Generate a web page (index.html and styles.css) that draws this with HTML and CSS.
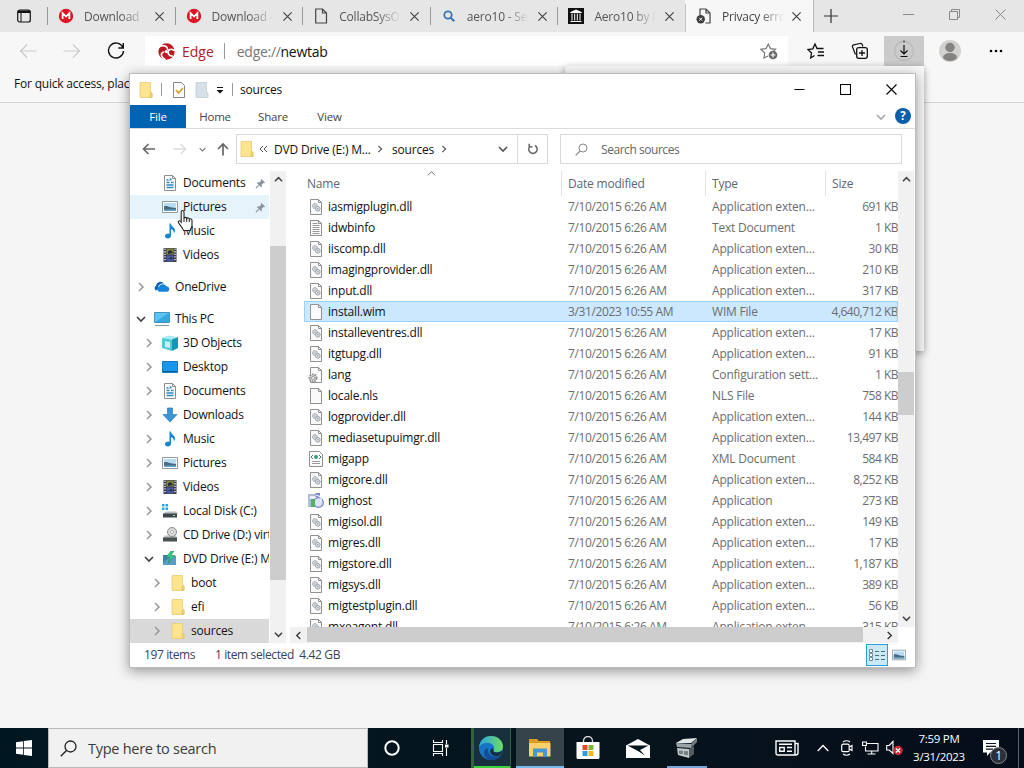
FILE: index.html
```html
<!DOCTYPE html>
<html lang="en">
<head>
  <meta charset="utf-8">
  <title>sources</title>
  <link rel="stylesheet" href="styles.css">
</head>
<body>
  <!-- shared icons -->
  <svg class="defs" width="0" height="0">
    <symbol id="close" viewBox="0 0 12 12"><path d="M1.5 1.5l9 9M10.5 1.5l-9 9" fill="none" stroke="currentColor" stroke-width="1.3"/></symbol>
    <symbol id="right" viewBox="0 0 10 10"><path d="M3 1l4 4-4 4" fill="none" stroke="currentColor" stroke-width="1.5"/></symbol>
    <symbol id="down" viewBox="0 0 10 10"><path d="M1 3l4 4 4-4" fill="none" stroke="currentColor" stroke-width="1.7"/></symbol>
    <symbol id="up" viewBox="0 0 10 10"><path d="M1 7l4-4 4 4" fill="none" stroke="currentColor" stroke-width="1.7"/></symbol>
    <symbol id="left" viewBox="0 0 10 10"><path d="M7 1L3 5l4 4" fill="none" stroke="currentColor" stroke-width="1.5"/></symbol>
    <symbol id="mega" viewBox="0 0 16 16"><circle cx="8" cy="8" r="7.2" fill="#dc1622"/><path d="M4.6 11V5.2L8 8.6l3.4-3.4V11" fill="none" stroke="#fff" stroke-width="1.8"/></symbol>
    <symbol id="folder" viewBox="0 0 16 16"><path d="M2 .5h10.500v10l1.500.5v4.500H2z" fill="#ffe48f" stroke="#e8cb70" stroke-width=".8"/><path d="M12 15.500v-4l.8-1 1.200.5v4.500z" fill="#f6d873" stroke="#dcbc58" stroke-width=".6"/></symbol>
    <symbol id="docs" viewBox="0 0 16 16"><path d="M2.500.5h8l3 3v12h-11z" fill="#fff" stroke="#8a8f94"/><path d="M10.500.5v3h3" fill="none" stroke="#8a8f94"/><path d="M4.500 5h2M4.500 7.500h3M4.500 10h7M4.500 12.500h7M9 7.500h2.500" stroke="#2f86bd" stroke-width="1.300"/><path d="M7.500 3.500h2v2h-2z" fill="#2f86bd"/></symbol>
    <symbol id="pics" viewBox="0 0 16 16"><path d="M.5 2.500h15v11H.5z" fill="#fff" stroke="#8d99a3"/><path d="M2 4h12v8H2z" fill="#b8dcf3"/><path d="M2 7.500c3-1.500 5 1.500 12 1.500v3H2z" fill="#456b84"/><path d="M2 10.500h12V12H2z" fill="#6ba3c7"/></symbol>
    <symbol id="music" viewBox="0 0 16 16"><path d="M7.500.5h1.400c.3 3 4.100 4 4.100 7 0 1.200-.6 2-1.300 2.700.2-2-.7-3.500-2.600-4.200v6.500c0 1.800-1.600 3-3.300 3S3 14.500 3 13.100c0-1.700 2.300-3 4.500-2.400z" fill="#1287d2"/></symbol>
    <symbol id="video" viewBox="0 0 16 16"><path d="M1.500 1h13v14h-13z" fill="#333a46"/><path d="M4.500 1.500h7v6h-7z" fill="#8a8640"/><path d="M4.500 8.500h7v6h-7z" fill="#4b58a3"/><path d="M6 4l3-1 2 3-5 1zM6 12l3-2 2 2z" fill="#27313b"/><path d="M3 1.500v13M13 1.500v13" stroke="#f4f4f4" stroke-width="1.300" stroke-dasharray="1.300 1.300"/></symbol>
    <symbol id="onedrive" viewBox="0 0 16 16"><path d="M1.700 11.500A3 3 0 0 1 2 6.800 4.500 4.500 0 0 1 10 4.500c-3.500-.5-6.500 2-6 5.500z" fill="#0a62b1"/><path d="M5 12.800a2.700 2.700 0 0 1-.2-5A4.300 4.300 0 0 1 12.500 7.300a2.800 2.800 0 0 1 .7 5.500z" fill="#1783d9"/></symbol>
    <symbol id="pc" viewBox="0 0 16 16"><path d="M.5 1.500h15v10H.5z" fill="#5cc3f3" stroke="#4694b8"/><path d="M1 11L15 2v9z" fill="#37a8e2"/><path d="M1 14.500h14" stroke="#7e98a6"/></symbol>
    <symbol id="cube" viewBox="0 0 16 16"><path d="M0 3l6-2.500L16 2 10 4.500z" fill="#aceaf3"/><path d="M0 3l10 1.500V16L0 13z" fill="#4fc8d8"/><path d="M10 4.500L16 2v11l-6 3z" fill="#1595b3"/><path d="M3 6l5 1v6l-5-1z" fill="#c4f0f3"/></symbol>
    <symbol id="desk" viewBox="0 0 16 16"><path d="M.5 2.500h15v11H.5z" fill="#1a96ec" stroke="#1378bd"/><path d="M1 12.500h14" stroke="#0d5e99"/></symbol>
    <symbol id="dl" viewBox="0 0 16 16"><path d="M5.500 1h5v6.500H15L8 15 1 7.500h4.500z" fill="#3a93d5" stroke="#2b7cba" stroke-width=".7"/></symbol>
    <symbol id="disk" viewBox="0 0 16 16"><path d="M4 8.500h10l2 2.500H1z" fill="#b9bec1"/><path d="M1 10.500h14v4H1z" fill="#3f4649"/><path d="M11 12h2v1h-2z" fill="#7ef09d"/><path d="M0 1h2.500v2.500H0zM3.500 1H6v2.500H3.500zM0 4.500h2.500V7H0zM3.500 4.500H6V7H3.500z" fill="#20a9e6"/></symbol>
    <symbol id="cd" viewBox="0 0 16 16"><path d="M3 8.500h11l1 2.500H1z" fill="#b9bec1"/><circle cx="10" cy="5" r="4.500" fill="#ddd" stroke="#888"/><circle cx="10" cy="5" r="1.500" fill="#fff" stroke="#999" stroke-width=".7"/><path d="M1 10.500h14v4H1z" fill="#4b5053"/></symbol>
    <symbol id="dvd" viewBox="0 0 16 16"><path d="M1 4h5l1 1h7v9H1z" fill="#3f80ad"/><path d="M1 12l8-7h5v9H1z" fill="#599dc7"/><path d="M9 0L4 6.500h4L6 12l7-7.500H9L12 0z" fill="#35c982" stroke="#218c5c" stroke-width=".6"/></symbol>
    <symbol id="page" viewBox="0 0 16 16"><path d="M2.500.5h8l3 3v12h-11z" fill="#fafafa" stroke="#919191"/><path d="M10.500.5v3h3" fill="none" stroke="#919191"/></symbol>
    <symbol id="dll" viewBox="0 0 16 16"><use href="#page"/><circle cx="7" cy="7" r="2.300" fill="#eef0f3" stroke="#9aa1a8"/><circle cx="7" cy="7" r=".8" fill="#8c949c"/><circle cx="9.800" cy="9.800" r="2.300" fill="#e4e8ec" stroke="#9aa1a8"/><circle cx="9.800" cy="9.800" r=".8" fill="#8c949c"/></symbol>
    <symbol id="txt" viewBox="0 0 16 16"><use href="#page"/><path d="M4.500 3.500h5M4.500 5.500h7M4.500 7.500h7M4.500 9.500h7M4.500 11.500h7M4.500 13.500h7" stroke="#9a9a9a"/></symbol>
    <symbol id="ini" viewBox="0 0 16 16"><use href="#page"/><circle cx="5" cy="11" r="3.500" fill="#e3e3e3" stroke="#909090" stroke-width="2" stroke-dasharray="1.700 .8"/><circle cx="5" cy="11" r="1.500" fill="#fff" stroke="#888" stroke-width=".8"/></symbol>
    <symbol id="xml" viewBox="0 0 16 16"><path d="M1.500.5h10l3 3v12h-13z" fill="#fcfcfc" stroke="#919191"/><path d="M5 4L3 6l2 2M11 4l2 2-2 2" fill="none" stroke="#447a80"/><circle cx="8" cy="6" r="2" fill="#3a9b7c"/><path d="M4 10.500h8M4 12.500h8" stroke="#999"/></symbol>
    <symbol id="app" viewBox="0 0 16 16"><path d="M0 1h9l2 2v11H0z" fill="#aebdd8"/><path d="M2 3h6v3H2z" fill="#e8f0ff"/><circle cx="10.500" cy="9.500" r="4.800" fill="#dbe3f8" stroke="#7a82cc" stroke-width="1.300"/><path d="M3 6h4v8H3z" fill="#58ad65"/><path d="M7.500 0H12v4H7.500z" fill="#7880c9"/><path d="M8 2l5 2v5" fill="none" stroke="#f0f3ff" stroke-width="1.300"/></symbol>
    <symbol id="pin" viewBox="0 0 12 12"><path d="M7 1l4 4-1 .7-.8-.2L7.300 7.400l.2 2-.9.8L2 5.500l.9-.8 2 .1 1.800-2-.4-1z" fill="#87939d"/><path d="M4 8l-3 3" stroke="#87939d" stroke-width="1.200"/></symbol>
  </svg>

  <div class="browser">
    <div class="tabs">
      <div class="tab-menu"><svg width="16" height="16" viewBox="0 0 16 16"><rect x="1.700" y="2" width="12.600" height="12" rx="2" fill="none" stroke="#111" stroke-width="1.200"/><path d="M2 2.500h12V5H2z" fill="#111"/><path d="M5 5v9" stroke="#111"/></svg></div>
      <div class="tab"><svg class="fav"><use href="#mega"/></svg><span>Download - M</span><svg class="x"><use href="#close"/></svg></div>
      <div class="tab"><svg class="fav"><use href="#mega"/></svg><span>Download - M</span><svg class="x"><use href="#close"/></svg></div>
      <div class="tab"><svg class="fav" viewBox="0 0 16 16"><path d="M2.700 1h6.800l4 4v10H2.700zM9.500 1v4h4" fill="none" stroke="#444" stroke-width="1.200"/></svg><span>CollabSysO</span><svg class="x"><use href="#close"/></svg></div>
      <div class="tab"><svg class="fav" viewBox="0 0 16 16"><circle cx="7" cy="7" r="3.700" fill="none" stroke="#3976b9" stroke-width="1.800"/><path d="M9.700 9.700l3.600 3.600" stroke="#3976b9" stroke-width="2"/></svg><span>aero10 - Se</span><svg class="x"><use href="#close"/></svg></div>
      <div class="tab"><svg class="fav" viewBox="0 0 16 16"><path d="M0 0h16v16H0z" fill="#111"/><path d="M2.500 4.500L8 2l5.500 2.500zM2.500 13.500h11M4 5.500v7M6.700 5.500v7M9.300 5.500v7M12 5.500v7" fill="#fff" stroke="#fff" stroke-width="1"/></svg><span>Aero10 by I</span><svg class="x"><use href="#close"/></svg></div>
      <div class="tab active"><svg class="fav" viewBox="0 0 16 16"><path d="M4 7V1h6l4 4v10H9.500M10 1v4h4" fill="none" stroke="#444" stroke-width="1.200"/><circle cx="4.700" cy="11.200" r="4.200" fill="#3b3b3b"/><path d="M3.200 9.700l3 3M6.200 9.700l-3 3" stroke="#fff"/></svg><span>Privacy erro</span><svg class="x"><use href="#close"/></svg></div>
      <div class="new-tab"><svg width="14" height="14" viewBox="0 0 14 14"><path d="M7 0v14M0 7h14" stroke="#333" stroke-width="1.200"/></svg></div>
      <div class="win-buttons">
        <svg width="11" height="11" viewBox="0 0 11 11"><path d="M0 5.500h11" stroke="#888"/></svg>
        <svg width="11" height="11" viewBox="0 0 11 11"><path d="M.5 2.500h8v8h-8zM2.500 2.500v-2h8v8h-2" fill="none" stroke="#888"/></svg>
        <svg width="11" height="11" viewBox="0 0 11 11"><path d="M.5.5l10 10M10.500.5l-10 10" stroke="#888"/></svg>
      </div>
    </div>
    <div class="toolbar">
      <div class="nav">
        <svg width="18" height="16" viewBox="0 0 18 16"><path d="M17.500 8H1.500M8 1.500L1.500 8 8 14.500" fill="none" stroke="#ccc" stroke-width="1.200"/></svg>
        <svg width="18" height="16" viewBox="0 0 18 16"><path d="M.5 8h16M10 1.500L16.500 8 10 14.500" fill="none" stroke="#ccc" stroke-width="1.200"/></svg>
        <svg width="18" height="18" viewBox="0 0 18 18"><path d="M15.800 5.300A7.500 7.500 0 1 0 16.500 9M16.300 1v5h-5" fill="none" stroke="#111" stroke-width="1.400"/></svg>
      </div>
      <div class="url">
        <svg width="17" height="17" viewBox="0 0 16 16"><circle cx="8" cy="8" r="7.700" fill="#bb1823"/><path d="M0 5c3-4 9-3 9 1.500M16 7.500c-4-3.500-8-.5-6 3 1 1.800 2.500 2 4 1.500M7 15.800C2.500 13.500 2 9.500 5.500 8.500" fill="none" stroke="#fff" stroke-width="1.500"/><circle cx="7.700" cy="8" r="1.500" fill="#fff"/></svg>
        <b>Edge</b><i></i><span>edge://<em>newtab</em></span>
        <svg class="fav-add" width="18" height="18" viewBox="0 0 18 18"><path d="M8 14l-4 2 .7-5L1 7.300l5-.7L8.300 2l2.200 4.600 5 .7-2 2" fill="none" stroke="#777" stroke-width="1.200"/><circle cx="13" cy="13" r="4.300" fill="#666"/><path d="M13 10.500v5M10.500 13h5" stroke="#fff" stroke-width="1.200"/></svg>
      </div>
      <div class="tools">
        <span><svg width="18" height="18" viewBox="0 0 18 18"><path d="M7.500 13.500L3.700 16l.8-5L1 7.500l4.800-.7L8 2l2 4.500h6.500M11 10h6M10.500 13.500H17" fill="none" stroke="#111" stroke-width="1.300"/></svg></span>
        <span><svg width="18" height="18" viewBox="0 0 18 18"><path d="M4.500 12.500L1.500 5Q1 3.300 2.700 2.800L9 1.500q1.800-.3 2.500 1.700l.4 1.300" fill="none" stroke="#111" stroke-width="1.200"/><rect x="5.700" y="5.700" width="10.600" height="10.600" rx="2" fill="none" stroke="#111" stroke-width="1.300"/><path d="M11 8v6M8 11h6" stroke="#111" stroke-width="1.300"/></svg></span>
        <span class="pressed"><svg width="22" height="22" viewBox="0 0 22 22"><circle cx="11" cy="11" r="9.500" fill="none" stroke="#bababa" stroke-width="1.500"/><path d="M11 5v9M7.500 10.500L11 14l3.500-3.500M7.500 16.500h7" fill="none" stroke="#111" stroke-width="1.200"/><path d="M11 .5v2" stroke="#111"/></svg></span>
        <span><svg width="22" height="22" viewBox="0 0 22 22"><circle cx="11" cy="11" r="11" fill="#d3d1cf"/><circle cx="11" cy="7.500" r="4.700" fill="#858381"/><ellipse cx="11" cy="17" rx="7" ry="4" fill="#858381"/></svg></span>
        <span><svg width="14" height="4" viewBox="0 0 14 4"><circle cx="2" cy="2" r="1.300"/><circle cx="7" cy="2" r="1.300"/><circle cx="12" cy="2" r="1.300"/></svg></span>
      </div>
    </div>
    <div class="bookmarks">For quick access, place your favorites here</div>
  </div>

  <div class="flyout"></div>

  <div class="explorer">
    <div class="title">
      <svg class="ic"><use href="#folder"/></svg><i></i>
      <svg class="ic check" viewBox="0 0 16 16"><path d="M2.500.5h8l3 3v12h-11z" fill="#fcfcfc" stroke="#888"/><path d="M5 8l2.500 3L12 6" fill="none" stroke="#d6a332" stroke-width="1.700"/></svg>
      <svg class="ic" viewBox="0 0 16 16"><path d="M2 .5h10.500v10l1.500.5v4.500H2z" fill="#d6e0e8" stroke="#c3ced6" stroke-width=".8"/></svg>
      <svg class="qat" width="8" height="8" viewBox="0 0 8 8"><path d="M1 1.500h6" stroke="#111"/><path d="M.5 4h7L4 7.500z" fill="#111"/></svg><i></i>
      <span>sources</span>
      <div class="controls">
        <svg width="11" height="11" viewBox="0 0 11 11"><path d="M.5 5.500h10" stroke="#000"/></svg>
        <svg width="11" height="11" viewBox="0 0 11 11"><path d="M.5.5h10v10H.5z" fill="none" stroke="#000" stroke-width="1.100"/></svg>
        <svg width="11" height="11" viewBox="0 0 11 11"><path d="M.5.5l10 10M10.500.5l-10 10" stroke="#000" stroke-width="1.100"/></svg>
      </div>
    </div>
    <div class="ribbon">
      <span class="file">File</span><span>Home</span><span>Share</span><span>View</span>
      <svg class="expand" width="10" height="10"><use href="#down"/></svg>
      <div class="help">?</div>
    </div>
    <div class="address">
      <svg class="back" width="14" height="12" viewBox="0 0 14 12"><path d="M13 6H2M6.500 1L1.500 6l5 5" fill="none" stroke="#666" stroke-width="1.600"/></svg>
      <svg class="fwd" width="14" height="12" viewBox="0 0 14 12"><path d="M.5 6H12M7.500 1l5 5-5 5" fill="none" stroke="#ddd" stroke-width="1.600"/></svg>
      <svg class="hist" width="7" height="7"><use href="#down"/></svg>
      <svg class="upper" width="12" height="14" viewBox="0 0 12 14"><path d="M6 13.500V2M1 7l5-5 5 5" fill="none" stroke="#666" stroke-width="1.700"/></svg>
      <div class="path">
        <svg class="ic"><use href="#folder"/></svg>
        <svg class="dbl" width="9" height="8" viewBox="0 0 9 8"><path d="M4 1L1 4l3 3M8 1L5 4l3 3" fill="none" stroke="#555"/></svg>
        <span class="drive">DVD Drive (E:) M...</span>
        <svg width="8" height="8"><use href="#right"/></svg>
        <span class="here">sources</span>
        <svg width="8" height="8"><use href="#right"/></svg>
        <svg class="drop" width="10" height="10"><use href="#down"/></svg>
        <div class="refresh"><svg width="12" height="12" viewBox="0 0 12 12"><path d="M8 2.500A4.200 4.200 0 1 1 3 3.200M2.200.8v3h3.300" fill="none" stroke="#666" stroke-width="1.500"/></svg></div>
      </div>
      <div class="search"><svg width="13" height="13" viewBox="0 0 13 13"><circle cx="8" cy="5" r="4" fill="none" stroke="#888"/><path d="M5 8L.7 12.300" stroke="#888" stroke-width="1.200"/></svg>Search sources</div>
    </div>
    <div class="content">
      <div class="tree">
        <div class="node l2"><svg class="ic"><use href="#docs"/></svg><span>Documents</span><svg class="pin"><use href="#pin"/></svg></div>
        <div class="node l2 hover"><svg class="ic"><use href="#pics"/></svg><span>Pictures</span><svg class="pin"><use href="#pin"/></svg></div>
        <div class="node l2"><svg class="ic"><use href="#music"/></svg><span>Music</span></div>
        <div class="node l2"><svg class="ic"><use href="#video"/></svg><span>Videos</span></div>
        <div class="node l1"><svg class="arrow"><use href="#right"/></svg><svg class="ic"><use href="#onedrive"/></svg><span>OneDrive</span></div>
        <div class="node l1"><svg class="arrow open"><use href="#down"/></svg><svg class="ic"><use href="#pc"/></svg><span>This PC</span></div>
        <div class="node l2"><svg class="arrow"><use href="#right"/></svg><svg class="ic"><use href="#cube"/></svg><span>3D Objects</span></div>
        <div class="node l2"><svg class="arrow"><use href="#right"/></svg><svg class="ic"><use href="#desk"/></svg><span>Desktop</span></div>
        <div class="node l2"><svg class="arrow"><use href="#right"/></svg><svg class="ic"><use href="#docs"/></svg><span>Documents</span></div>
        <div class="node l2"><svg class="arrow"><use href="#right"/></svg><svg class="ic"><use href="#dl"/></svg><span>Downloads</span></div>
        <div class="node l2"><svg class="arrow"><use href="#right"/></svg><svg class="ic"><use href="#music"/></svg><span>Music</span></div>
        <div class="node l2"><svg class="arrow"><use href="#right"/></svg><svg class="ic"><use href="#pics"/></svg><span>Pictures</span></div>
        <div class="node l2"><svg class="arrow"><use href="#right"/></svg><svg class="ic"><use href="#video"/></svg><span>Videos</span></div>
        <div class="node l2"><svg class="arrow"><use href="#right"/></svg><svg class="ic"><use href="#disk"/></svg><span>Local Disk (C:)</span></div>
        <div class="node l2"><svg class="arrow"><use href="#right"/></svg><svg class="ic"><use href="#cd"/></svg><span>CD Drive (D:) virtio</span></div>
        <div class="node l2"><svg class="arrow open"><use href="#down"/></svg><svg class="ic"><use href="#dvd"/></svg><span>DVD Drive (E:) M</span></div>
        <div class="node l3"><svg class="arrow"><use href="#right"/></svg><svg class="ic"><use href="#folder"/></svg><span>boot</span></div>
        <div class="node l3"><svg class="arrow"><use href="#right"/></svg><svg class="ic"><use href="#folder"/></svg><span>efi</span></div>
        <div class="node l3 current"><svg class="arrow"><use href="#right"/></svg><svg class="ic"><use href="#folder"/></svg><span>sources</span></div>
      </div>
      <div class="vbar tree-bar"><svg><use href="#up"/></svg><div class="track"><div class="thumb"></div></div><svg><use href="#down"/></svg></div>
      <div class="list">
        <div class="list-top">
          <div class="files">
            <div class="row head"><span>Name<svg class="sort" width="9" height="9" viewBox="0 0 10 10"><path d="M1 7l4-4 4 4" fill="none" stroke="#666"/></svg></span><span>Date modified</span><span>Type</span><span>Size</span></div>
            <div class="row"><svg class="ic"><use href="#dll"/></svg><b>iasmigplugin.dll</b><span>7/10/2015 6:26 AM</span><span>Application exten...</span><span>691 KB</span></div>
            <div class="row"><svg class="ic"><use href="#txt"/></svg><b>idwbinfo</b><span>7/10/2015 6:26 AM</span><span>Text Document</span><span>1 KB</span></div>
            <div class="row"><svg class="ic"><use href="#dll"/></svg><b>iiscomp.dll</b><span>7/10/2015 6:26 AM</span><span>Application exten...</span><span>30 KB</span></div>
            <div class="row"><svg class="ic"><use href="#dll"/></svg><b>imagingprovider.dll</b><span>7/10/2015 6:26 AM</span><span>Application exten...</span><span>210 KB</span></div>
            <div class="row"><svg class="ic"><use href="#dll"/></svg><b>input.dll</b><span>7/10/2015 6:26 AM</span><span>Application exten...</span><span>317 KB</span></div>
            <div class="row selected"><svg class="ic"><use href="#page"/></svg><b>install.wim</b><span>3/31/2023 10:55 AM</span><span>WIM File</span><span>4,640,712 KB</span></div>
            <div class="row"><svg class="ic"><use href="#dll"/></svg><b>installeventres.dll</b><span>7/10/2015 6:26 AM</span><span>Application exten...</span><span>17 KB</span></div>
            <div class="row"><svg class="ic"><use href="#dll"/></svg><b>itgtupg.dll</b><span>7/10/2015 6:26 AM</span><span>Application exten...</span><span>91 KB</span></div>
            <div class="row"><svg class="ic"><use href="#ini"/></svg><b>lang</b><span>7/10/2015 6:26 AM</span><span>Configuration sett...</span><span>1 KB</span></div>
            <div class="row"><svg class="ic"><use href="#page"/></svg><b>locale.nls</b><span>7/10/2015 6:26 AM</span><span>NLS File</span><span>758 KB</span></div>
            <div class="row"><svg class="ic"><use href="#dll"/></svg><b>logprovider.dll</b><span>7/10/2015 6:26 AM</span><span>Application exten...</span><span>144 KB</span></div>
            <div class="row"><svg class="ic"><use href="#dll"/></svg><b>mediasetupuimgr.dll</b><span>7/10/2015 6:26 AM</span><span>Application exten...</span><span>13,497 KB</span></div>
            <div class="row"><svg class="ic"><use href="#xml"/></svg><b>migapp</b><span>7/10/2015 6:26 AM</span><span>XML Document</span><span>584 KB</span></div>
            <div class="row"><svg class="ic"><use href="#dll"/></svg><b>migcore.dll</b><span>7/10/2015 6:26 AM</span><span>Application exten...</span><span>8,252 KB</span></div>
            <div class="row"><svg class="ic"><use href="#app"/></svg><b>mighost</b><span>7/10/2015 6:26 AM</span><span>Application</span><span>273 KB</span></div>
            <div class="row"><svg class="ic"><use href="#dll"/></svg><b>migisol.dll</b><span>7/10/2015 6:26 AM</span><span>Application exten...</span><span>149 KB</span></div>
            <div class="row"><svg class="ic"><use href="#dll"/></svg><b>migres.dll</b><span>7/10/2015 6:26 AM</span><span>Application exten...</span><span>17 KB</span></div>
            <div class="row"><svg class="ic"><use href="#dll"/></svg><b>migstore.dll</b><span>7/10/2015 6:26 AM</span><span>Application exten...</span><span>1,187 KB</span></div>
            <div class="row"><svg class="ic"><use href="#dll"/></svg><b>migsys.dll</b><span>7/10/2015 6:26 AM</span><span>Application exten...</span><span>389 KB</span></div>
            <div class="row"><svg class="ic"><use href="#dll"/></svg><b>migtestplugin.dll</b><span>7/10/2015 6:26 AM</span><span>Application exten...</span><span>56 KB</span></div>
            <div class="row"><svg class="ic"><use href="#dll"/></svg><b>mxeagent.dll</b><span>7/10/2015 6:26 AM</span><span>Application exten...</span><span>315 KB</span></div>
          </div>
          <div class="vbar list-bar"><svg><use href="#up"/></svg><div class="track"><div class="thumb"></div></div><svg><use href="#down"/></svg></div>
        </div>
        <div class="hbar"><svg><use href="#left"/></svg><div class="thumb"></div><svg><use href="#right"/></svg></div>
      </div>
    </div>
    <div class="status">
      <span>197 items</span><span>1 item selected&nbsp; 4.42 GB</span>
      <div class="view on"><svg width="18" height="16" viewBox="0 0 18 16"><path d="M1.500 2.500h3v3h-3zM1.500 6.500h3v3h-3zM1.500 10.500h3v3h-3z" fill="#fff" stroke="#6e8b9c"/><path d="M7 4.500h4M13 4.500h4M7 8.500h4M13 8.500h4M7 12.500h4M13 12.500h4" stroke="#556b78"/></svg></div>
      <div class="view"><svg width="14" height="14"><use href="#pics"/></svg></div>
    </div>
  </div>

  <svg class="cursor" width="18" height="24" viewBox="0 0 18 24"><path d="M5.500 1.500c1 0 1.500.7 1.500 1.700v6c.5-1.200 2.500-1 2.700.3.600-1 2.500-.7 2.600.6.900-.7 2.700-.2 2.700 1.200v5c0 2.500-1.500 3.500-2 5.200H6.500C6 19 3.500 17 2 14.500c-.7-1.200-1.500-2 0-2.600 1-.4 1.700.5 2.200 1.200V3.200c0-1 .4-1.700 1.300-1.700z" fill="#fff" stroke="#222" stroke-width="1.100"/><path d="M7 9v4M9.700 9.700V13M12.300 10.500V13" stroke="#222"/></svg>

  <div class="taskbar">
    <div class="btn"><svg width="16" height="16" viewBox="0 0 16 16"><path d="M0 2.300L7 1.200v6.400H0zM7.800 1.100L16 0v7.600H7.800zM0 8.400h7v6.400l-7-1zM7.800 8.400H16V16l-8.200-1.100z" fill="#fff"/></svg></div>
    <div class="task-search"><svg width="17" height="17" viewBox="0 0 17 17"><circle cx="10.500" cy="6.500" r="5.500" fill="none" stroke="#222" stroke-width="1.300"/><path d="M6.500 10.500L.8 16.200" stroke="#222" stroke-width="1.400"/></svg>Type here to search</div>
    <div class="btn"><svg width="16" height="16" viewBox="0 0 16 16"><circle cx="8" cy="8" r="6.700" fill="none" stroke="#fff" stroke-width="2"/></svg></div>
    <div class="btn"><svg width="17" height="16" viewBox="0 0 17 16"><path d="M1.500 0v2.500h9V0M1.500 16v-2.500h9V16M1.500 4.500h9v7h-9zM14.500 0v4M14.500 8v8" fill="none" stroke="#fff" stroke-width="1.100"/><path d="M13 4.500h3.500v3H13z" fill="#fff"/></svg></div>
    <div class="btn edge"><svg width="26" height="26" viewBox="0 0 26 26">
      <defs><linearGradient id="g1" x1="0" x2="1"><stop offset="0" stop-color="#2aa6e0"/><stop offset="1" stop-color="#6fdc63"/></linearGradient></defs>
      <circle cx="13" cy="13" r="12" fill="#1775c6"/><path d="M1.200 12C2 4 8 1 13 1c7 0 12 5 12 10.500 0 3.500-2.500 5.700-6 5.700-2.500 0-4-.8-3.500-2 .8-1.600 1-3-.2-4.700C12.500 6.700 5 6.500 1.200 12z" fill="url(#g1)"/><path d="M10 13c-1 5 3 9.500 9 8.500 2-.3 3-1 4-1.800C20 25 14 26 10.500 24.500 4 21.500 5 14 10 13z" fill="#124e97"/><path d="M15.500 15.200c-.5 1.500 1 2.200 3.500 2.200 2 0 4-.8 5.300-2.200-.3 2.500-1.500 4.500-3 5.500-5 1.500-9-1-9-4.500 0-1.500.8-2.700 2-3.500z" fill="#18303d"/></svg></div>
    <div class="btn files-btn"><svg width="22" height="20" viewBox="0 0 22 20"><path d="M0 1h8l2 2h11v4H0z" fill="#dc9b22"/><path d="M0 5h21.500v13.500H0z" fill="#fbd269"/><path d="M4 10.500h14v8.500h-4v-4.500H8V19H4z" fill="#4797d2"/></svg></div>
    <div class="btn"><svg width="24" height="24" viewBox="0 0 24 24"><path d="M7.500 7V5a4.500 4.500 0 0 1 9 0v2" fill="none" stroke="#ddd" stroke-width="1.300"/><path d="M.5 6h23v15.500a1.500 1.500 0 0 1-1.500 1.500H2a1.500 1.500 0 0 1-1.500-1.500z" fill="#fff"/><path d="M6.500 9h5v5h-5z" fill="#e64f25"/><path d="M12.500 9h5v5h-5z" fill="#7eb73b"/><path d="M6.500 15h5v5h-5z" fill="#2c9fda"/><path d="M12.500 15h5v5h-5z" fill="#f4b820"/></svg></div>
    <div class="btn mail"><svg width="24" height="19" viewBox="0 0 24 19"><path d="M0 6.500L12 0l12 6.500V19H0z" fill="#fff"/><path d="M1.500 6.500h21L14 11l5 5.500L12 12z" fill="#06141c"/></svg></div>
    <div class="btn tool"><svg width="22" height="22" viewBox="0 0 22 22"><path d="M0 6l7-4 14-1-6 5z" fill="#e2e6e7"/><path d="M0 6l15 1v4L1 10z" fill="#9aa2a5"/><path d="M15 7l6-6v4l-6 6z" fill="#747c80"/><path d="M1 11l12 1v9L2 18z" fill="#c3c8ca"/><path d="M13 12l5-3v8l-5 4z" fill="#555c60"/><path d="M3 13.500l4 .3v3.500l-4-.5zM8 14l4 .3v4l-4-.6z" fill="#767e82"/></svg></div>
    <div class="tray">
      <svg class="news" width="24" height="16" viewBox="0 0 24 16"><path d="M1 1h19v14H3q-2 0-2-2zM20 3.500h3V13q0 2-2.500 2" fill="none" stroke="#fff" stroke-width="1.400"/><path d="M4 4.200h13M12 7.500h5M12 11.200h5" stroke="#fff" stroke-width="1.500"/><path d="M4.700 7.500h4.500v3.800H4.700z" fill="none" stroke="#fff" stroke-width="1.400"/></svg>
      <svg class="chev" width="12" height="8" viewBox="0 0 12 8"><path d="M.7 7L6 1.500 11.300 7" fill="none" stroke="#fff" stroke-width="1.300"/></svg>
      <svg class="cam" width="12" height="16" viewBox="0 0 12 16"><rect x=".7" y="4.200" width="7.500" height="7.500" rx="1.500" fill="none" stroke="#fff" stroke-width="1.200"/><path d="M8.500 7l2.500-1.500v5L8.500 9M2 2Q5.500-.5 9 2M2 14q3.500 2.500 7 0" fill="none" stroke="#fff" stroke-width="1.100"/></svg>
      <svg class="net" width="17" height="14" viewBox="0 0 17 14"><path d="M5 2.500h11v7.500H3.500V5.500M9.700 10v3M5.500 13h8M.6 1h3.800v3.500H.6z" fill="none" stroke="#fff" stroke-width="1.100"/></svg>
      <svg class="vol" width="17" height="16" viewBox="0 0 17 16"><path d="M.7 5.500h2.500L7 1.500v12L3.200 10H.7z" fill="none" stroke="#fff" stroke-width="1.100"/><circle cx="12" cy="10.500" r="4.700" fill="#c92a35"/><path d="M10 8.500l4 4M14 8.500l-4 4" stroke="#fff" stroke-width="1.200"/></svg>
      <div class="clock">7:59 PM<br>3/31/2023</div>
      <div class="notif"><svg width="16" height="16" viewBox="0 0 16 16"><path d="M0 0h16v12.500H7L4 16v-3.500H0z" fill="#fff"/><path d="M3 3.500h10M3 6.300h10M3 9.100h7" stroke="#0a131d" stroke-width="1.200"/></svg><span>1</span></div>
    </div>
  </div>
</body>
</html>
```

FILE: styles.css
```css
* {
  box-sizing: border-box;
}

body {
  margin: 0;
  width: 1024px;
  height: 768px;
  overflow: hidden;
  position: relative;
  background: #f5f5f5;
  font-family: "Open Sans", "Noto Sans", sans-serif;
  font-size: 12px;
  letter-spacing: -0.2px;
  color: #111;
  white-space: nowrap;
}

svg {
  display: block;
  flex: none;
}

.defs {
  position: absolute;
}

.ic {
  width: 16px;
  height: 16px;
}

/* browser */
.tabs {
  display: flex;
  height: 32px;
  background: #e6e6e6;
}

.tab-menu {
  width: 47px;
  display: flex;
  align-items: center;
  justify-content: center;
}

.tab {
  width: 127.6px;
  display: flex;
  align-items: center;
  padding-left: 11px;
  position: relative;
  color: #555;
}

.tab::before {
  content: "";
  position: absolute;
  left: 0;
  top: 7px;
  height: 18px;
  border-left: 1px solid #999;
}

.tab.active {
  background: #f7f7f7;
  color: #444;
}

.tab.active::before {
  top: 4px;
  height: 28px;
  border-color: #c4c4c4;
}

.fav {
  width: 16px;
  height: 16px;
}

.tab span {
  width: 62px;
  margin: 0 8px 0 10px;
  overflow: hidden;
  -webkit-mask-image: linear-gradient(to right, #000 60%, transparent);
  mask-image: linear-gradient(to right, #000 60%, transparent);
}

.x {
  width: 11px;
  height: 11px;
  color: #444;
}

.tab.active .x {
  margin-left: -1px;
}

.new-tab {
  display: flex;
  align-items: center;
  padding-left: 10px;
  border-left: 1px solid #bbb;
}

.win-buttons {
  margin-left: auto;
  display: flex;
  gap: 35px;
  padding: 9px 18px 0 0;
}

.toolbar {
  display: flex;
  height: 38px;
  background: #f7f7f7;
  padding-top: 4px;
}

.nav {
  width: 145px;
  height: 30px;
  display: flex;
  align-items: center;
  gap: 26px;
  padding-left: 19px;
}

.url {
  width: 643px;
  height: 30px;
  background: #fff;
  display: flex;
  align-items: center;
  padding-left: 13px;
  font-size: 14px;
  letter-spacing: 0;
  color: #777;
}

.url b {
  font-weight: normal;
  color: #ad1b27;
  margin-left: 7px;
}

.url i {
  height: 16px;
  border-left: 1px solid #999;
  margin: 0 12px 0 10px;
}

.url span {
  letter-spacing: -0.3px;
}

.url em {
  font-style: normal;
  color: #111;
}

.fav-add {
  margin-left: auto;
  margin-right: 10px;
}

.tools {
  display: flex;
  height: 30px;
  padding-left: 8px;
  gap: 4px;
}

.tools span {
  width: 40px;
  display: flex;
  align-items: center;
  justify-content: center;
}

.tools .pressed {
  background: #cbcbcb;
}

.tools span:nth-child(4) {
  width: 44px;
}

.bookmarks {
  height: 33px;
  background: #f7f7f7;
  border-bottom: 1px solid #d4d4d4;
  padding: 5px 0 0 14px;
}

.flyout {
  position: absolute;
  left: 565px;
  top: 66px;
  width: 359px;
  height: 285px;
  background: #f7f7f7;
  box-shadow: 0 2px 7px rgba(0, 0, 0, 0.35);
}

/* explorer window */
.explorer {
  position: absolute;
  left: 129px;
  top: 73px;
  width: 787px;
  height: 595px;
  background: #fff;
  border: 1px solid #bbb;
  box-shadow: 0 3px 12px rgba(0, 0, 0, 0.4);
  display: flex;
  flex-direction: column;
}

.title {
  height: 31px;
  display: flex;
  align-items: center;
  padding-left: 8px;
}

.title i {
  height: 13px;
  border-left: 1px solid #999;
  margin-left: 7px;
}

.title .check {
  margin: 0 7px 0 9px;
}

.title .qat {
  margin-left: 6px;
}

.title .qat + i {
  margin: 0 7px 0 8px;
}

.controls {
  margin-left: auto;
  display: flex;
  gap: 35px;
  padding-right: 18px;
}

.ribbon {
  height: 24px;
  display: flex;
  border-bottom: 1px solid #dcdcdc;
  line-height: 23px;
  font-size: 11.5px;
  color: #444;
}

.ribbon span {
  width: 58px;
  text-align: center;
}

.ribbon span:last-of-type {
  width: 55px;
}

.ribbon .file {
  width: 56px;
  background: #0063b1;
  color: #fff;
}

.expand {
  margin: 7px 9px 0 auto;
  color: #aaa;
}

.help {
  width: 16px;
  height: 16px;
  margin: 3px 4px 0 0;
  border-radius: 50%;
  background: #0b5fa8;
  color: #fff;
  font-weight: bold;
  line-height: 16px;
  text-align: center;
}

.address {
  height: 42px;
  display: flex;
  align-items: center;
  padding: 0 0 2px 12px;
}

.fwd {
  margin-left: 17px;
}

.hist {
  margin-left: 12px;
  color: #777;
}

.upper {
  margin-left: 11px;
}

.path {
  width: 312px;
  height: 30px;
  margin-left: 7px;
  border: 1px solid #d9d9d9;
  display: flex;
  align-items: center;
  padding-left: 2px;
  color: #111;
}

.path > svg {
  color: #555;
}

.dbl {
  margin: 0 6px 0 4px;
}

.drive {
  width: 102px;
}

.here {
  width: 48px;
  margin-left: 8px;
}

.drop {
  margin: 0 9px 0 auto;
}

.refresh {
  width: 30px;
  height: 28px;
  border-left: 1px solid #d9d9d9;
  display: flex;
  align-items: center;
  justify-content: center;
}

.search {
  width: 342px;
  height: 30px;
  margin-left: 12px;
  border: 1px solid #d9d9d9;
  display: flex;
  align-items: center;
  gap: 13px;
  padding-left: 14px;
  letter-spacing: -0.45px;
  color: #666;
}

.content {
  height: 472px;
  display: flex;
}

.tree {
  width: 140px;
  overflow: hidden;
}

.node {
  height: 24px;
  width: 139px;
  overflow: hidden;
  display: flex;
  align-items: center;
}

.node span {
  padding-bottom: 1px;
}

.node .ic {
  margin-right: 5px;
}

.l1 {
  padding-left: 6px;
  margin: 8px 0;
}

.l1 + .l1 {
  margin-bottom: 0;
}

.l2 {
  padding-left: 14px;
}

.l3 {
  padding-left: 22px;
}

.arrow {
  width: 10px;
  height: 10px;
  margin-right: 8px;
  color: #999;
}

.arrow.open {
  color: #444;
}

.node > .ic:first-child {
  margin-left: 18px;
}

.pin {
  width: 11px;
  height: 11px;
  margin: 0 3px 0 auto;
}

.hover {
  background: #e5f3fb;
}

.current {
  background: #d9d9d9;
}

.vbar {
  width: 16px;
  background: #f1f1f1;
  display: flex;
  flex-direction: column;
  align-items: center;
  color: #444;
}

.vbar svg,
.hbar svg {
  width: 9px;
  height: 9px;
  margin: 4px 3px;
}

.track {
  flex: 1;
  width: 100%;
}

.thumb {
  background: #cdcdcd;
}

.tree-bar .track {
  padding-top: 58px;
}

.tree-bar .thumb {
  height: 334px;
}

.list-bar .track {
  padding-top: 184px;
}

.list-bar .thumb {
  height: 43px;
}

.list {
  flex: 1;
  padding-left: 4px;
}

.list-top {
  height: 456px;
  display: flex;
}

.files {
  width: 608px;
  overflow: hidden;
}

.row {
  height: 21px;
  width: 594px;
  margin-left: 14px;
  display: flex;
  align-items: center;
  padding-left: 4px;
  color: #6d6d6d;
}

.row .ic {
  margin-right: 4px;
}

.row b {
  width: 234px;
  font-weight: normal;
  color: #111;
}

.row b + span {
  width: 150px;
  padding-left: 6px;
  letter-spacing: -0.38px;
}

.row b ~ span:nth-of-type(2) {
  width: 112px;
}

.row b ~ span:nth-of-type(3) {
  flex: 1;
  text-align: right;
  letter-spacing: -0.5px;
}

.row.selected {
  background: #cce8ff;
  outline: 1px solid #99d1ff;
  outline-offset: -1px;
}

.row.head {
  height: 25px;
  padding: 0;
  color: #5c6675;
}

.row.head span {
  height: 25px;
  line-height: 25px;
  padding-left: 6px;
  border-left: 1px solid #e5e5e5;
}

.row.head span:nth-of-type(1) {
  width: 257px;
  padding-left: 3px;
  border: 0;
  position: relative;
}

.row.head span:nth-of-type(2) {
  width: 144px;
}

.row.head span:nth-of-type(3) {
  width: 120px;
}

.sort {
  position: absolute;
  left: 123px;
  top: -2px;
}

.hbar {
  height: 16px;
  width: 608px;
  background: #f1f1f1;
  display: flex;
}

.hbar svg {
  margin: 4px;
  color: #333;
}

.hbar .thumb {
  width: 556px;
  height: 15px;
}

.hbar svg:last-child {
  margin-left: auto;
}

.status {
  flex: 1;
  display: flex;
  align-items: center;
  padding: 0 0 1px 14px;
  letter-spacing: -0.38px;
  color: #33445a;
}

.status span {
  width: 71px;
}

.view {
  width: 22px;
  height: 22px;
  display: flex;
  align-items: center;
  justify-content: center;
  margin-right: 5px;
}

.view.on {
  margin-left: auto;
  margin-right: 0;
  background: #cbe8f6;
  border: 1px solid #26a0da;
}

.cursor {
  position: absolute;
  left: 177px;
  top: 209px;
}

/* taskbar */
.taskbar {
  position: absolute;
  left: 0;
  top: 728px;
  width: 1024px;
  height: 40px;
  display: flex;
  background: linear-gradient(to right, #001722, #06141c 60%, #050d1a);
}

.btn {
  width: 48px;
  display: flex;
  align-items: center;
  justify-content: center;
}

.task-search {
  width: 320px;
  background: #f1f1f1;
  border: 1px solid #bbb;
  display: flex;
  align-items: center;
  gap: 11px;
  padding-left: 11px;
  font-size: 14.5px;
  letter-spacing: -0.27px;
  color: #3c3c3c;
}

.edge {
  width: 40px;
  margin: 0 5px 0 7px;
  padding-right: 3px;
  background: #18303d;
  border: solid #33623f;
  border-width: 0 1px 0 3px;
  box-shadow: inset 0 -2px #3bd23d;
}

.files-btn {
  background: #35434b;
  box-shadow: inset 0 -2px #76b9ed;
}

.mail {
  width: 51px;
}

.tool {
  width: 40px;
  margin-left: 4px;
  box-shadow: inset 0 -2px #76a5d8;
}

.tray {
  flex: 1;
  display: flex;
  align-items: center;
  padding-left: 68px;
  color: #fff;
}

.chev {
  margin-left: 18px;
}

.cam {
  margin-left: 12px;
}

.net {
  margin-left: 9px;
}

.vol {
  margin-left: 7px;
}

.clock {
  width: 60px;
  margin-left: 6px;
  text-align: center;
  line-height: 18px;
  font-size: 11.5px;
  letter-spacing: -0.3px;
}

.notif {
  margin-left: 14px;
  position: relative;
}

.notif span {
  position: absolute;
  left: 7px;
  top: 7px;
  width: 17px;
  height: 17px;
  border: 1px solid #888;
  border-radius: 50%;
  background: #2b3038;
  font-size: 12px;
  line-height: 15px;
  text-align: center;
}

.tray::after {
  content: "";
  height: 40px;
  margin: 0 5px 0 auto;
  border-left: 1px solid #5a636b;
}
```
